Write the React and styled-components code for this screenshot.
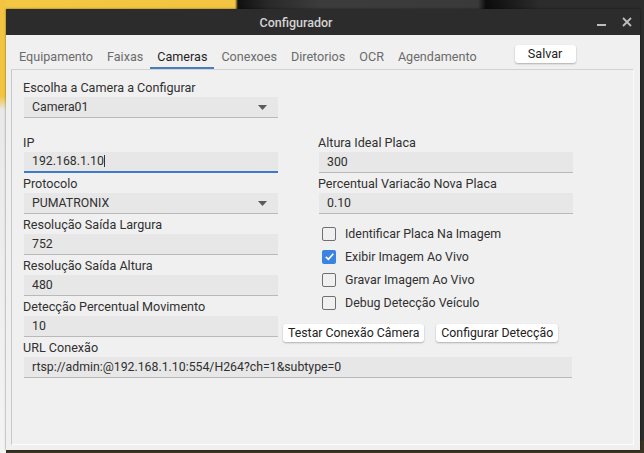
import styled, { createGlobalStyle } from 'styled-components';

const GlobalStyle = createGlobalStyle`
  html, body {
    margin: 0;
    padding: 0;
    width: 644px;
    height: 453px;
    overflow: hidden;
    font-family: Roboto, "Liberation Sans", sans-serif;
  }
`;

const cameraFields = [
  { label: 'IP', value: '192.168.1.10', focused: true },
  { label: 'Protocolo', value: 'PUMATRONIX', select: true },
  { label: 'Resolução Saída Largura', value: '752' },
  { label: 'Resolução Saída Altura', value: '480' },
  { label: 'Detecção Percentual Movimento', value: '10' },
];

const plateFields = [
  { label: 'Altura Ideal Placa', value: '300' },
  { label: 'Percentual Variacão Nova Placa', value: '0.10' },
];

const options = [
  { label: 'Identificar Placa Na Imagem', checked: false },
  { label: 'Exibir Imagem Ao Vivo', checked: true },
  { label: 'Gravar Imagem Ao Vivo', checked: false },
  { label: 'Debug Detecção Veículo', checked: false },
];

const tabs = ['Equipamento', 'Faixas', 'Cameras', 'Conexoes', 'Diretorios', 'OCR', 'Agendamento'];

function Arrow() {
  return (
    <svg width="9" height="5" viewBox="0 0 9 5">
      <path d="M0 0h9L4.5 5z" fill="#5a5a5a" />
    </svg>
  );
}

function Field({ label, value, select, focused, wide }) {
  return (
    <FieldBox $wide={wide}>
      <Label>{label}</Label>
      <Input $focused={focused}>
        <span>
          {value}
          {focused && <Caret />}
        </span>
        {select && <Arrow />}
      </Input>
    </FieldBox>
  );
}

function Check({ checked, label }) {
  return (
    <CheckRow>
      <Box $checked={checked}>
        {checked && (
          <svg width="11" height="11" viewBox="0 0 11 11">
            <path d="M1.8 5.8l2.6 2.5L9.3 2.8" fill="none" stroke="#fff" strokeWidth="1.7" />
          </svg>
        )}
      </Box>
      {label}
    </CheckRow>
  );
}

export default function App() {
  return (
    <Desktop>
      <GlobalStyle />
      <Window>
        <TitleBar>
          <Title>Configurador</Title>
          <WinControls>
            <MinIcon />
            <svg width="10" height="10" viewBox="0 0 10 10">
              <path d="M1 1l8 8M9 1L1 9" stroke="#bdbdbd" strokeWidth="1.8" />
            </svg>
          </WinControls>
        </TitleBar>
        <Body>
          <TabBar>
            {tabs.map((t) => (
              <Tab key={t} $active={t === 'Cameras'}>
                {t}
              </Tab>
            ))}
            <SaveButton>Salvar</SaveButton>
          </TabBar>
          <Panel>
            <Field label="Escolha a Camera a Configurar" value="Camera01" select />
            <Columns>
              <Column>
                {cameraFields.map((f) => (
                  <Field key={f.label} {...f} />
                ))}
                <Field
                  label="URL Conexão"
                  value="rtsp://admin:@192.168.1.10:554/H264?ch=1&subtype=0"
                  wide
                />
              </Column>
              <Column>
                {plateFields.map((f) => (
                  <Field key={f.label} {...f} />
                ))}
                <CheckList>
                  {options.map((o) => (
                    <Check key={o.label} {...o} />
                  ))}
                </CheckList>
                <ButtonRow>
                  <Button>Testar Conexão Câmera</Button>
                  <Button>Configurar Detecção</Button>
                </ButtonRow>
              </Column>
            </Columns>
          </Panel>
        </Body>
      </Window>
    </Desktop>
  );
}

const Desktop = styled.div`
  width: 644px;
  height: 453px;
  box-sizing: border-box;
  padding: 9px 4px 3px 6px;
  display: flex;
  background:
    linear-gradient(to bottom, #f2c441 0, #f2c441 96px, #e9e9e9 110px, #f4f4f4 100%) left top / 6px 100% no-repeat,
    linear-gradient(90deg, #f4c842 0, #f2c441 235px, #101010 238px, #2a2a2a 270px, #3c3c3c 320px, #3a3a3a 478px, #0c0c0c 486px, #2c2c2c 540px) left top / 100% 9px no-repeat,
    linear-gradient(to bottom, #2c2c2c 0, #2c2c2c 440px, #3b3323 441px);
`;

const Window = styled.div`
  flex: 1;
  display: flex;
  flex-direction: column;
  background: #f0f0f0;
  box-shadow: 0 0 2px rgba(0, 0, 0, 0.5);
`;

const TitleBar = styled.div`
  height: 26px;
  flex-shrink: 0;
  background: #2c2c2c;
  display: flex;
  align-items: center;
  justify-content: center;
  position: relative;
`;

const Title = styled.div`
  color: #d4d4d4;
  font-size: 12.5px;
  font-weight: 500;
  margin-left: -54px;
`;

const WinControls = styled.div`
  position: absolute;
  right: 8px;
  top: 0;
  height: 26px;
  display: flex;
  align-items: center;
  gap: 16px;
`;

const MinIcon = styled.span`
  width: 9px;
  height: 2px;
  background: #bdbdbd;
  margin-top: 5px;
`;

const Body = styled.div`
  flex: 1;
  display: flex;
  flex-direction: column;
  padding: 0 6px 5px 5px;
`;

const TabBar = styled.div`
  height: 34px;
  display: flex;
  align-items: flex-end;
  padding-left: 1px;
`;

const Tab = styled.div`
  height: 23px;
  padding: 0 7px;
  box-sizing: border-box;
  font-size: 12.6px;
  color: ${(p) => (p.$active ? '#1f1f1f' : '#6b6b6b')};
  border-bottom: 2px solid ${(p) => (p.$active ? '#4a7cc0' : 'transparent')};
  line-height: 22px;
`;

const Button = styled.button`
  font-family: inherit;
  font-size: 12.3px;
  color: #222;
  background: #fff;
  border: none;
  border-radius: 3px;
  box-shadow: 0 1px 2px rgba(0, 0, 0, 0.28);
  height: 18px;
  padding: 0 5px;
  line-height: 18px;
`;

const SaveButton = styled(Button)`
  width: 61px;
  margin-left: 31px;
  align-self: flex-start;
  margin-top: 10px;
  font-size: 12.6px;
`;

const Panel = styled.div`
  flex: 1;
  border-top: 1px solid #d2d2d2;
  border-left: 1px solid #c8c8c8;
  border-right: 1px solid #fbfbfb;
  border-bottom: 1px solid #fbfbfb;
  padding: 8px 0 0 11px;
`;

const FieldBox = styled.div`
  width: ${(p) => (p.$wide ? '549px' : '255px')};
  margin-bottom: 1px;
`;

const Label = styled.div`
  height: 19px;
  line-height: 19px;
  font-size: 12.6px;
  color: #303030;
`;

const Input = styled.div`
  height: 21px;
  margin-left: 1px;
  box-sizing: border-box;
  background: #e7e7e7;
  border-bottom: ${(p) => (p.$focused ? '2px solid #3f7ac8' : '1px solid #b9b9b9')};
  display: flex;
  align-items: center;
  justify-content: space-between;
  padding: 0 11px 0 8px;
  font-size: 12.3px;
  color: #2f2f2f;
  line-height: 1;
`;

const Caret = styled.span`
  display: inline-block;
  width: 1px;
  height: 12px;
  background: #333;
  vertical-align: -2px;
`;

const Columns = styled.div`
  display: grid;
  grid-template-columns: 255px 255px;
  column-gap: 40px;
  align-items: start;
  margin-top: 15px;
`;

const Column = styled.div`
  display: flex;
  flex-direction: column;
`;

const CheckList = styled.div`
  display: flex;
  flex-direction: column;
  margin-top: 7px;
  padding-left: 4px;
`;

const CheckRow = styled.div`
  height: 23px;
  display: flex;
  align-items: center;
  gap: 9px;
  font-size: 12.4px;
  color: #303030;
`;

const Box = styled.div`
  width: 14px;
  height: 14px;
  box-sizing: border-box;
  border-radius: 2px;
  border: ${(p) => (p.$checked ? 'none' : '1.5px solid #707070')};
  background: ${(p) => (p.$checked ? '#3a83e0' : 'transparent')};
  display: flex;
  align-items: center;
  justify-content: center;
`;

const ButtonRow = styled.div`
  display: flex;
  gap: 12px;
  margin-top: 10px;
  margin-left: -35px;
`;
